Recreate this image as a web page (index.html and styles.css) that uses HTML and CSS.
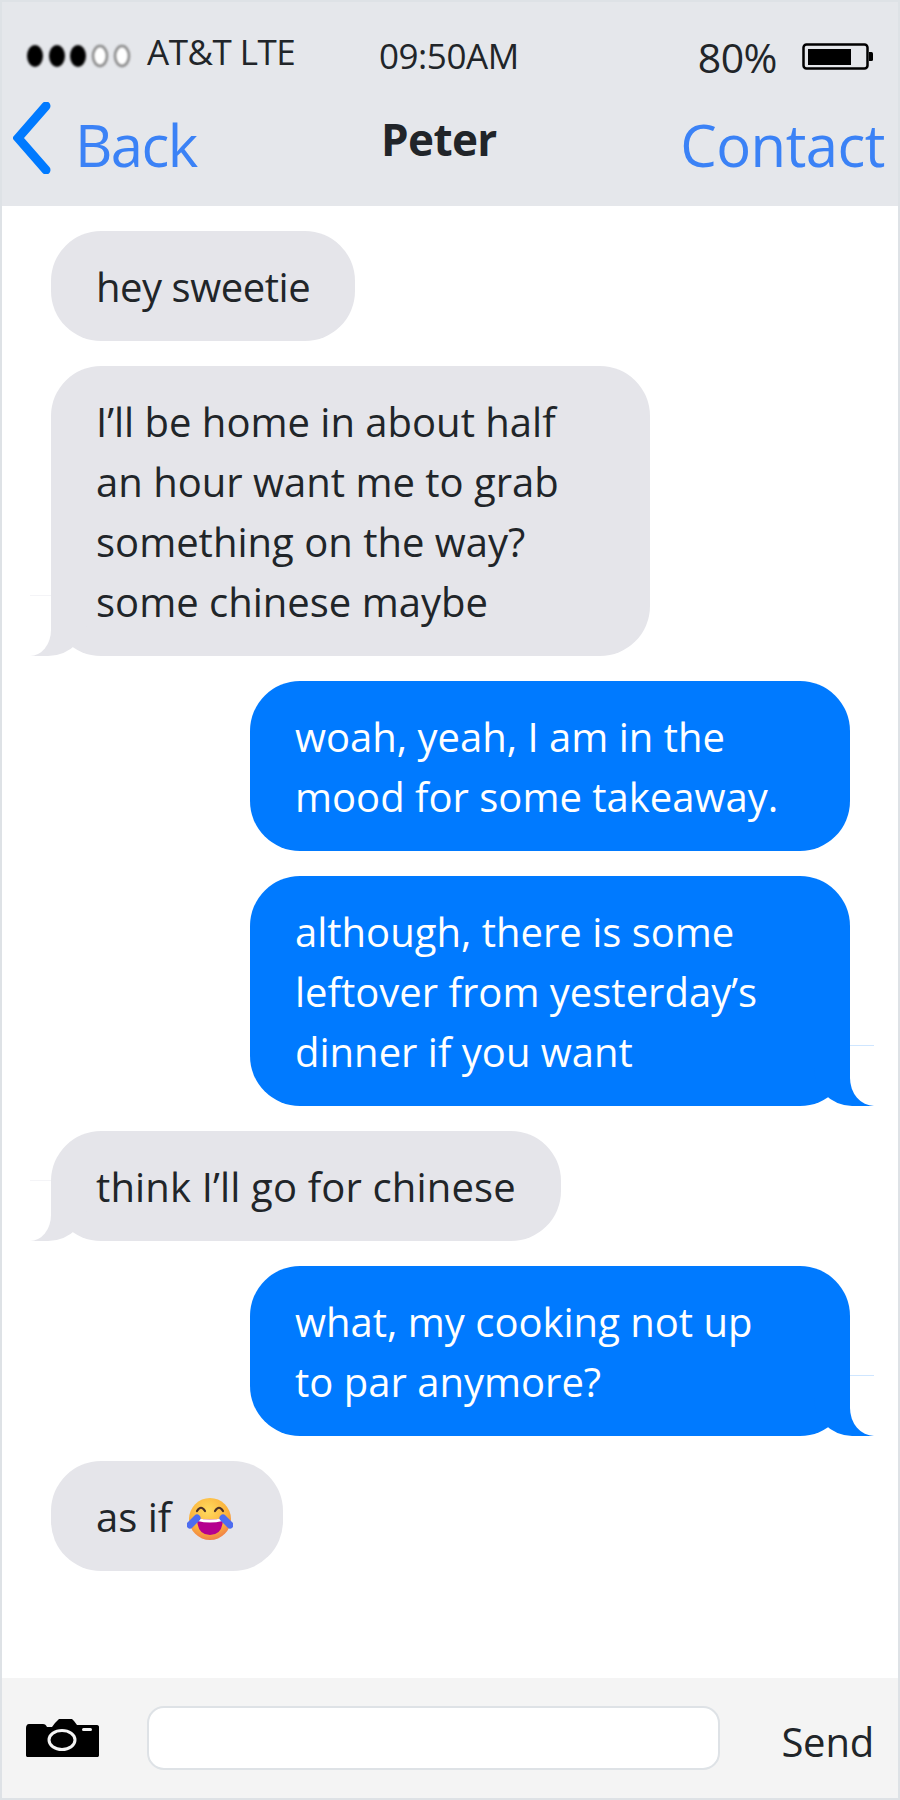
FILE: index.html
```html
<!DOCTYPE html>
<html lang="en">
<head>
<meta charset="utf-8">
<title>Peter</title>
<link rel="stylesheet" href="styles.css">
</head>
<body>
<div class="phone">
  <header class="top">
    <div class="status">
      <div class="carrier">
        <svg class="dots" width="110" height="26" viewBox="0 0 110 26">
          <ellipse cx="8" cy="13" rx="8" ry="11" fill="#000"/>
          <ellipse cx="30" cy="13" rx="8" ry="11" fill="#000"/>
          <ellipse cx="51" cy="13" rx="8" ry="11" fill="#000"/>
          <ellipse cx="73" cy="13" rx="7" ry="10" fill="#fff" stroke="#888" stroke-width="2.500"/>
          <ellipse cx="95" cy="13" rx="7" ry="10" fill="#fff" stroke="#888" stroke-width="2.500"/>
        </svg>
        <span class="carrier-name">AT&amp;T LTE</span>
      </div>
      <div class="clock">09:50AM</div>
      <div class="power">
        <span class="percent">80%</span>
        <svg class="battery" width="71" height="28" viewBox="0 0 71 28">
          <rect x="1.500" y="1.500" width="64" height="24" rx="3" fill="none" stroke="#000" stroke-width="2.500"/>
          <rect x="6" y="6" width="43" height="16" fill="#000"/>
          <path d="M67 9h2.500a1.500 1.500 0 0 1 1.500 1.500v6a1.500 1.500 0 0 1-1.500 1.500H67z" fill="#000"/>
        </svg>
      </div>
    </div>
    <nav class="nav">
      <a class="back">
        <svg class="chevron" width="38" height="72" viewBox="0 0 38 72">
          <path d="M33 4 L5 36 L33 68" fill="none" stroke="#007aff" stroke-width="9" stroke-linecap="round" stroke-linejoin="miter"/>
        </svg>
        <span class="link back-label">Back</span>
      </a>
      <div class="name">Peter</div>
      <a class="link contact">Contact</a>
    </nav>
  </header>
  <main class="thread">
    <div class="msg them snug">hey sweetie</div>
    <div class="msg them wide tail">I’ll be home in about half<br>an hour want me to grab<br>something on the way?<br>some chinese maybe</div>
    <div class="msg me wide">woah, yeah, I am in the<br>mood for some takeaway.</div>
    <div class="msg me wide tail">although, there is some<br>leftover from yesterday’s<br>dinner if you want</div>
    <div class="msg them tail roomy">think I’ll go for chinese</div>
    <div class="msg me wide tail">what, my cooking not up<br>to par anymore?</div>
    <div class="msg them">as if
      <svg class="emoji" width="46" height="44" viewBox="0 0 46 44">
        <defs>
          <radialGradient id="face" cx="0.45" cy="0.3" r="0.8">
            <stop offset="0" stop-color="#ffdb5e"/>
            <stop offset="0.6" stop-color="#fbb03b"/>
            <stop offset="1" stop-color="#ec6a4c"/>
          </radialGradient>
        </defs>
        <circle cx="23" cy="22" r="21" fill="url(#face)"/>
        <path d="M10 21 Q23 24 36 21 Q36 38 23 38 Q10 38 10 21z" fill="#b5008f"/>
        <path d="M10 21 Q23 24 36 21 L35.500 24 Q23 27 10.500 24z" fill="#fff"/>
        <path d="M10 14 Q14 7.500 18 14 M28 14 Q32 7.500 36 14" fill="none" stroke="#4a2f28" stroke-width="2.200" stroke-linecap="round"/>
        <path d="M3 28 L10 21 M43 28 L36 21" stroke="#4d6cf0" stroke-width="7" stroke-linecap="round"/>
      </svg>
    </div>
  </main>
  <footer class="compose">
    <svg class="camera" width="73" height="38" viewBox="0 0 73 38">
      <path d="M3 5h14c2 0 3 1 4 3h5l3-4 2-2 2-2h13l2 2 3 4h20c1.500 0 2 1 2 2v28c0 1.500-.5 2-2 2H2c-1.500 0-2-.5-2-2V9c0-2 1-4 3-4z" fill="#000"/>
      <ellipse cx="36" cy="21" rx="13" ry="9.500" fill="none" stroke="#f4f4f4" stroke-width="3"/>
      <rect x="56" y="9" width="10" height="3" rx="1.500" fill="#f4f4f4"/>
    </svg>
    <div class="field"></div>
    <span class="send">Send</span>
  </footer>
</div>
</body>
</html>
```
FILE: styles.css
```css
* {
  box-sizing: border-box;
}

html,
body {
  margin: 0;
  height: 100%;
}

body {
  font-family: "Open Sans", "Noto Sans", sans-serif;
  color: #212529;
  background: #fff;
}

.phone {
  height: 1800px;
  border: 2px solid #dee2e6;
  display: flex;
  flex-direction: column;
}

.top {
  height: 204px;
  background: #e5e7eb;
  padding: 29px 13px 0 11px;
  flex: none;
}

.status {
  display: flex;
  align-items: flex-start;
  height: 50px;
}

.carrier {
  width: 366px;
  display: flex;
  align-items: flex-start;
  padding-left: 14px;
}

.dots {
  margin-top: 12px;
  filter: blur(0.8px);
  flex: none;
}

.carrier-name {
  font-size: 35px;
  line-height: 42px;
  margin-left: 10px;
  letter-spacing: -0.5px;
}

.clock {
  font-size: 35px;
  line-height: 44px;
  padding-top: 3px;
  letter-spacing: -0.45px;
}

.power {
  display: flex;
  align-items: flex-start;
  margin-left: auto;
  padding-right: 12px;
  gap: 25px;
}

.percent {
  font-size: 41px;
  line-height: 52px;
  letter-spacing: -0.5px;
}

.battery {
  margin-top: 12px;
  flex: none;
}

.nav {
  display: flex;
  align-items: flex-start;
  margin-top: 18px;
}

.back {
  display: flex;
  align-items: flex-start;
  width: 368px;
}

.chevron {
  flex: none;
  margin-top: 3px;
}

.link {
  font-size: 58px;
  line-height: 78px;
  color: #3b82f6;
  letter-spacing: -0.5px;
  margin-top: 7px;
}

.back-label {
  margin-left: 24px;
  letter-spacing: -1.6px;
}

.name {
  font-size: 44px;
  line-height: 56px;
  font-weight: 700;
  letter-spacing: -0.6px;
  margin-top: 12px;
}

.contact {
  margin-left: auto;
}

.thread {
  flex: 1;
  background: #fff;
  padding: 25px 48px 25px 49px;
  display: flex;
  flex-direction: column;
  gap: 25px;
}

.msg {
  position: relative;
  width: fit-content;
  padding: 26px 45px 24px;
  border-radius: 50px;
  font-size: 40px;
  line-height: 60px;
  letter-spacing: 0;
  white-space: nowrap;
}

.snug {
  letter-spacing: -0.45px;
}

.roomy {
  letter-spacing: 0.15px;
}

.wide {
  width: 599px;
}

.them {
  background: #e5e5ea;
  align-self: flex-start;
}

.me {
  background: #007aff;
  color: #fff;
  align-self: flex-end;
}

.me.wide {
  width: 600px;
}

.tail::before,
.tail::after {
  content: "";
  position: absolute;
  bottom: 0;
  height: 60px;
}

.them.tail::before {
  left: -21px;
  width: 58px;
  background: #e5e5ea;
  border-bottom-right-radius: 40px;
}

.them.tail::after {
  left: -21px;
  width: 21px;
  background: #fff;
  border-top: 1px solid #f4f4f7;
  border-bottom-right-radius: 21px 26px;
}

.me.tail::before {
  right: -24px;
  width: 60px;
  background: #007aff;
  border-bottom-left-radius: 38px;
}

.me.tail::after {
  right: -24px;
  width: 24px;
  background: #fff;
  border-top: 1px solid #cfe6ff;
  border-bottom-left-radius: 24px 28px;
}

.emoji {
  vertical-align: -9px;
  margin-left: 5px;
  margin-right: 5px;
}

.compose {
  height: 120px;
  background: #f4f4f4;
  flex: none;
  display: flex;
  align-items: flex-start;
  padding: 28px 24px 0 24px;
}

.camera {
  flex: none;
  margin-top: 13px;
}

.field {
  width: 573px;
  height: 64px;
  margin-left: 48px;
  background: #fff;
  border: 2px solid #dee2e6;
  border-radius: 17px;
  flex: none;
}

.send {
  font-size: 40px;
  line-height: 52px;
  margin-left: auto;
  margin-top: 10px;
  letter-spacing: -0.2px;
}
```
